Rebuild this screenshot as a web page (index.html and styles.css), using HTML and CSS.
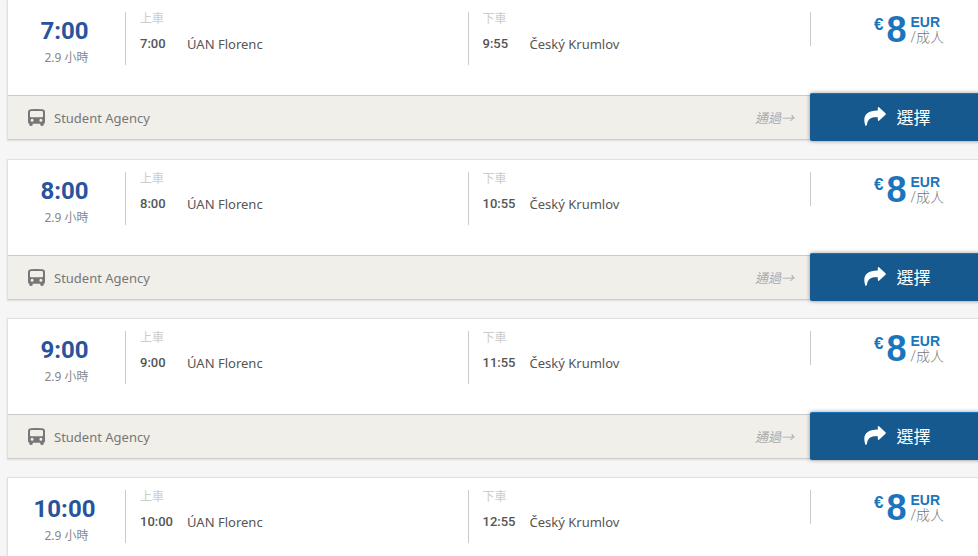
FILE: index.html
```
<!DOCTYPE html>
<html lang="zh-Hant">

<head>
  <meta charset="UTF-8">
  <meta name="viewport" content="width=device-width, initial-scale=1.0">
  <title>ÚAN Florenc - Český Krumlov</title>
  <link rel="stylesheet" href="styles.css">
</head>

<body>
  <svg class="sprite" aria-hidden="true">
    <symbol id="icon-bus" viewBox="0 0 17 17">
      <path fill-rule="evenodd" d="M3 0.300Q8.500-.3 14 .3q3 .3 3 2.700v10q0 1.500-1.300 1.700v1.100q0 1.200-1.700 1.200t-1.700-1.200v-1.100H4.700v1.100Q4.700 17 3 17t-1.700-1.200v-1.100Q0 14.500 0 13V3Q0 .6 3 .3zM3.500 2Q2 2 2 3.300V7q0 1.200 1.200 1.200h10.600Q15 8.200 15 7V3.300Q15 2 13.500 2zM4.100 9.800a1.500 1.500 0 1 0 0 3 1.500 1.500 0 1 0 0-3zm8.800 0a1.500 1.500 0 1 0 0 3 1.500 1.500 0 1 0 0-3z" />
    </symbol>
    <symbol id="icon-share" viewBox="0 0 22 19">
      <path d="M14.300 0Q14.800 0 15.300.5L21.500 6.200Q22.200 7 21.500 7.800L15.300 13.500Q14 14.500 13.800 13V10.300C7.500 9.600 3.500 11.500 2.900 18.300Q1.800 19.300 1.200 18.200C-1.500 10 1.500 3.800 13.800 3.600V.8Q13.800 0 14.300 0z" />
    </symbol>
  </svg>

  <ul class="trips">
    <li class="trip">
      <div class="trip-body">
        <div class="depart">
          <div class="depart-time">7:00</div>
          <div class="duration">2.9 小時</div>
        </div>
        <div class="stop">
          <div class="stop-label">上車</div>
          <div class="stop-row"><span class="stop-time">7:00</span><span class="stop-name">ÚAN Florenc</span></div>
        </div>
        <div class="stop">
          <div class="stop-label">下車</div>
          <div class="stop-row"><span class="stop-time">9:55</span><span class="stop-name">Český Krumlov</span></div>
        </div>
        <div class="price">
          <span class="symbol">€</span><span class="amount">8</span>
          <div class="unit"><b class="currency">EUR</b><span class="per">/成人</span></div>
        </div>
      </div>
      <div class="trip-footer">
        <div class="carrier"><svg class="bus"><use href="#icon-bus" /></svg>Student Agency</div>
        <div class="via">通過→</div>
        <button class="select" type="button"><svg class="share"><use href="#icon-share" /></svg>選擇</button>
      </div>
    </li>

    <li class="trip">
      <div class="trip-body">
        <div class="depart">
          <div class="depart-time">8:00</div>
          <div class="duration">2.9 小時</div>
        </div>
        <div class="stop">
          <div class="stop-label">上車</div>
          <div class="stop-row"><span class="stop-time">8:00</span><span class="stop-name">ÚAN Florenc</span></div>
        </div>
        <div class="stop">
          <div class="stop-label">下車</div>
          <div class="stop-row"><span class="stop-time">10:55</span><span class="stop-name">Český Krumlov</span></div>
        </div>
        <div class="price">
          <span class="symbol">€</span><span class="amount">8</span>
          <div class="unit"><b class="currency">EUR</b><span class="per">/成人</span></div>
        </div>
      </div>
      <div class="trip-footer">
        <div class="carrier"><svg class="bus"><use href="#icon-bus" /></svg>Student Agency</div>
        <div class="via">通過→</div>
        <button class="select" type="button"><svg class="share"><use href="#icon-share" /></svg>選擇</button>
      </div>
    </li>

    <li class="trip">
      <div class="trip-body">
        <div class="depart">
          <div class="depart-time">9:00</div>
          <div class="duration">2.9 小時</div>
        </div>
        <div class="stop">
          <div class="stop-label">上車</div>
          <div class="stop-row"><span class="stop-time">9:00</span><span class="stop-name">ÚAN Florenc</span></div>
        </div>
        <div class="stop">
          <div class="stop-label">下車</div>
          <div class="stop-row"><span class="stop-time">11:55</span><span class="stop-name">Český Krumlov</span></div>
        </div>
        <div class="price">
          <span class="symbol">€</span><span class="amount">8</span>
          <div class="unit"><b class="currency">EUR</b><span class="per">/成人</span></div>
        </div>
      </div>
      <div class="trip-footer">
        <div class="carrier"><svg class="bus"><use href="#icon-bus" /></svg>Student Agency</div>
        <div class="via">通過→</div>
        <button class="select" type="button"><svg class="share"><use href="#icon-share" /></svg>選擇</button>
      </div>
    </li>

    <li class="trip">
      <div class="trip-body">
        <div class="depart">
          <div class="depart-time">10:00</div>
          <div class="duration">2.9 小時</div>
        </div>
        <div class="stop">
          <div class="stop-label">上車</div>
          <div class="stop-row"><span class="stop-time">10:00</span><span class="stop-name">ÚAN Florenc</span></div>
        </div>
        <div class="stop">
          <div class="stop-label">下車</div>
          <div class="stop-row"><span class="stop-time">12:55</span><span class="stop-name">Český Krumlov</span></div>
        </div>
        <div class="price">
          <span class="symbol">€</span><span class="amount">8</span>
          <div class="unit"><b class="currency">EUR</b><span class="per">/成人</span></div>
        </div>
      </div>
    </li>
  </ul>
</body>

</html>
```
FILE: styles.css
```
* {
  box-sizing: border-box;
}

body {
  margin: 0;
  overflow-x: hidden;
  background: #f6f6f6;
  color: #555;
  font-family: "Noto Sans", "Noto Sans CJK TC", sans-serif;
  font-size: 13px;
  line-height: 18px;
}

/* keep the page edge clean, it still scrolls */
html {
  scrollbar-width: none;
}

.sprite {
  display: none;
}

.trips {
  list-style: none;
  margin: -1px -9px 0 7px;
  padding: 0;
}

.trip {
  margin-bottom: 18px;
  background: #fff;
  border: 1px solid #e0e0e0;
  border-bottom-color: #ccc;
  box-shadow: 0 1px 2px rgba(0, 0, 0, .1);
}

.trip:first-child {
  margin-bottom: 19px;
}

.trip-body {
  display: grid;
  grid-template-columns: 117px 1fr 1fr 176px;
  align-items: start;
  height: 95px;
  padding-top: 12px;
}

.depart {
  padding-right: 4px;
  text-align: center;
}

.depart-time {
  color: #27549b;
  font-family: Roboto, sans-serif;
  font-size: 24px;
  font-weight: 700;
  line-height: 38px;
}

.duration {
  padding-left: 4px;
  color: #888;
  font-size: 12px;
  line-height: 16px;
}

.stop {
  height: 53px;
  padding-left: 14px;
  border-left: 1px solid #c8cacc;
}

.stop-label {
  color: #ccc;
  font-size: 12px;
  line-height: 14px;
}

.stop-row {
  display: flex;
  margin-top: 9px;
}

.stop-time {
  width: 47px;
  font-family: Roboto, sans-serif;
  font-size: 13px;
  font-weight: 500;
}

.price {
  display: flex;
  gap: 3px;
  height: 34px;
  padding-left: 63px;
  border-left: 1px solid #c8cacc;
  color: #1b75bc;
  font-family: "Liberation Sans", "Noto Sans CJK TC", sans-serif;
}

.symbol {
  font-size: 17px;
  font-weight: 700;
  line-height: 26px;
}

.amount {
  font-size: 36px;
  font-weight: 700;
  line-height: 36px;
}

.unit {
  display: flex;
  flex-direction: column;
  padding: 3px 0 0 1px;
}

.currency {
  font-size: 14px;
  line-height: 15px;
}

.per {
  color: #777;
  font-family: Roboto, "Noto Sans CJK TC", sans-serif;
  font-size: 14px;
  font-weight: 300;
  line-height: 15px;
}

.trip-footer {
  display: grid;
  grid-template-columns: 1fr auto 176px;
  grid-template-rows: 43px;
  align-items: center;
  background: #f0efea;
  border-top: 1px solid #c8cacc;
}

.carrier {
  display: flex;
  align-items: center;
  gap: 9px;
  padding-left: 20px;
  color: #777;
}

.bus {
  width: 17px;
  height: 17px;
  fill: #777;
}

.via {
  padding-right: 16px;
  color: #aaa;
  font-style: italic;
}

.select {
  display: flex;
  align-items: center;
  justify-content: center;
  gap: 11px;
  height: 48px;
  margin-bottom: 2px;
  padding: 0 2px 2px 0;
  border: 0;
  border-top: 1px solid #1b75bc;
  border-radius: 2px;
  background: #15598e;
  box-shadow: 0 0 4px rgba(0, 0, 0, .4);
  color: #fff;
  font-family: inherit;
  font-size: 17px;
  cursor: pointer;
}

.share {
  width: 22px;
  height: 19px;
  fill: #fff;
}
```
